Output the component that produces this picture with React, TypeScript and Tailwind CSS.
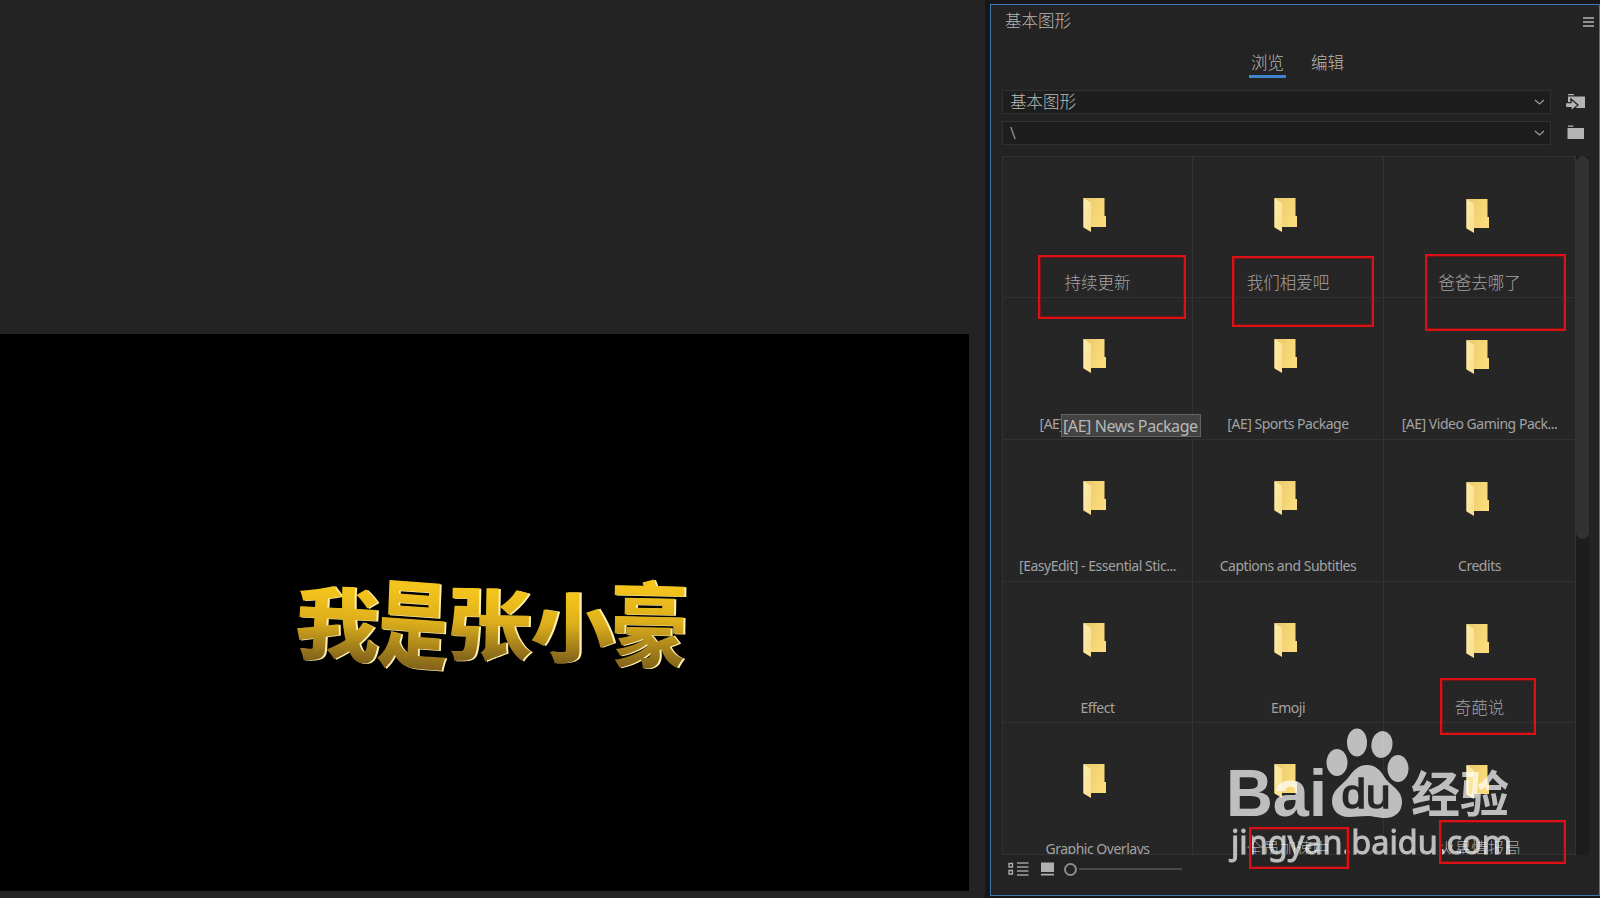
import clsx from "clsx";

type Folder = {
  label: string;
  cjk?: boolean;
};

const folders: Folder[] = [
  { label: "持续更新", cjk: true },
  { label: "我们相爱吧", cjk: true },
  { label: "爸爸去哪了", cjk: true },
  { label: "[AE] News Package" },
  { label: "[AE] Sports Package" },
  { label: "[AE] Video Gaming Pack..." },
  { label: "[EasyEdit] - Essential Stic..." },
  { label: "Captions and Subtitles" },
  { label: "Credits" },
  { label: "Effect" },
  { label: "Emoji" },
  { label: "奇葩说", cjk: true },
  { label: "Graphic Overlays" },
  { label: "全员加速中", cjk: true },
  { label: "火星情报局", cjk: true },
];

const marks = [
  "left-[1038px] top-[255px] w-[148px] h-[64px]",
  "left-[1232px] top-[256px] w-[142px] h-[71px]",
  "left-[1425px] top-[254px] w-[141px] h-[77px]",
  "left-[1440px] top-[678px] w-[96px] h-[57px]",
  "left-[1249px] top-[827px] w-[100px] h-[42px]",
  "left-[1439px] top-[820px] w-[127px] h-[44px]",
];

const titleGlyphs = [
  { ch: "我", x: 297, y: 586, w: 81, h: 75, rot: 3 },
  { ch: "是", x: 379, y: 579, w: 68, h: 90, rot: 3 },
  { ch: "张", x: 448, y: 587, w: 82, h: 74, rot: 1 },
  { ch: "小", x: 532, y: 591, w: 81, h: 71, rot: 0 },
  { ch: "豪", x: 612, y: 581, w: 74, h: 87, rot: 1 },
];

function FolderIcon() {
  return (
    <svg width="24" height="35" viewBox="0 0 24 35">
      <defs>
        <linearGradient id="back" x1="0" y1="0" x2="1" y2="0.4">
          <stop offset="0" stopColor="#e8c868" />
          <stop offset="1" stopColor="#fbdc7c" />
        </linearGradient>
        <linearGradient id="front" x1="0" y1="0" x2="1" y2="1">
          <stop offset="0" stopColor="#ffeeb0" />
          <stop offset="1" stopColor="#f9dd8b" />
        </linearGradient>
      </defs>
      <path d="M0.5 0H21.5V18H23V29H0.5Z" fill="url(#back)" />
      <path d="M0.5 0L8 5V34L0.5 29.5Z" fill="url(#front)" />
    </svg>
  );
}

function FolderCell({ folder, index }: { folder: Folder; index: number }) {
  const lastCol = index % 3 === 2;

  return (
    <div className="flex flex-col items-center min-w-0 border-r border-b border-[#323232] bg-[#262626]">
      <div
        className={clsx(
          "flex justify-center h-[34px] shrink-0",
          lastCol ? "mt-[42px] mr-[3px]" : "mt-[41px] mr-[5px]"
        )}
      >
        <FolderIcon />
      </div>

      <span
        className={clsx(
          "h-6 leading-6 shrink-0 whitespace-nowrap text-[#a3a3a3]",
          lastCol ? "mt-[38px]" : "mt-[39px]",
          folder.cjk
            ? "text-[16.5px] font-light"
            : "text-[14px] tracking-[-0.48px]"
        )}
      >
        {folder.label}
      </span>
    </div>
  );
}

function Select({ value }: { value: string }) {
  return (
    <div className="flex items-center justify-between w-[549px] h-6 pl-[7px] pr-[5px] border border-[#303030] bg-[#1d1d1d] text-[16.5px] font-light text-[#b8b8b8]">
      <span>{value}</span>
      <svg width="11" height="7" viewBox="0 0 11 7" fill="none">
        <path d="M1 1L5.5 5L10 1" stroke="#a0a0a0" strokeWidth="1.1" />
      </svg>
    </div>
  );
}

function InstallIcon() {
  return (
    <svg width="20" height="18" viewBox="0 0 20 18">
      <path d="M2 1H8V2.2H2Z M2 3.5H19V15H2Z" fill="#b4b4b4" />
      <path
        d="M-0.5 9.6H5V6L12 12L5 18V14.6H-0.5Z"
        fill="#b4b4b4"
        stroke="#242424"
        strokeWidth="1.3"
      />
    </svg>
  );
}

function ProgramMonitor() {
  return (
    <section className="w-[985px] h-full pt-[334px] bg-[#232323]">
      <div className="w-[969px] h-[557px] bg-black">
        <svg width="969" height="557" viewBox="0 334 969 557">
          <defs>
            <linearGradient
              id="gold"
              gradientUnits="userSpaceOnUse"
              x1="0"
              y1="8"
              x2="0"
              y2="100"
            >
              <stop offset="0" stopColor="#f3c41c" />
              <stop offset="0.4" stopColor="#dcae1c" />
              <stop offset="1" stopColor="#76591a" />
            </linearGradient>
          </defs>

          {titleGlyphs.map((g) => (
            <g
              key={g.ch}
              transform={`translate(${g.x} ${g.y}) scale(${g.w / 96} ${g.h / 94}) rotate(${g.rot} 48 48)`}
              className="font-black text-[100px]"
            >
              <text x="0.5" y="86" fill="#fff0b0">
                {g.ch}
              </text>
              <text x="-2" y="85.5" fill="url(#gold)">
                {g.ch}
              </text>
            </g>
          ))}
        </svg>
      </div>
    </section>
  );
}

function Watermark() {
  return (
    <svg
      className="absolute left-[1220px] top-[720px] opacity-70"
      width="300"
      height="150"
      viewBox="1220 720 300 150"
      fill="#ffffff"
    >
      <text
        x="1226"
        y="816"
        textLength="101"
        lengthAdjust="spacingAndGlyphs"
        className="font-['Liberation_Sans',sans-serif] font-bold text-[67px]"
      >
        Bai
      </text>

      <mask id="duMask">
        <rect x="1320" y="720" width="100" height="110" fill="white" />
        <text
          x="1341.5"
          y="808"
          textLength="49"
          lengthAdjust="spacingAndGlyphs"
          fill="black"
          stroke="black"
          strokeWidth="1.4"
          className="font-['Liberation_Sans',sans-serif] text-[40px]"
        >
          du
        </text>
      </mask>
      <path
        mask="url(#duMask)"
        d="M1367 765C1376 765 1381 771 1385 778C1391 786 1402 790 1402 802C1402 812 1395 818 1385 818C1378 818 1374 816 1367 816C1360 816 1356 817 1349 817C1338 817 1332 810 1332 801C1332 790 1341 786 1348 778C1353 771 1358 765 1367 765Z"
      />
      <ellipse cx="1337" cy="762.5" rx="10.5" ry="13.5" />
      <ellipse cx="1357" cy="742.5" rx="10" ry="14" />
      <ellipse cx="1382" cy="744.5" rx="10.5" ry="13.5" transform="rotate(8 1382 744)" />
      <ellipse cx="1398" cy="768.5" rx="10.5" ry="13.5" />

      <text
        x="1411"
        y="811.5"
        textLength="98"
        lengthAdjust="spacingAndGlyphs"
        className="font-bold text-[49px]"
      >
        经验
      </text>

      <text
        x="1231"
        y="854"
        textLength="281"
        lengthAdjust="spacingAndGlyphs"
        stroke="#ffffff"
        strokeWidth="0.9"
        className="text-[32px]"
      >
        jingyan.baidu.com
      </text>
    </svg>
  );
}

export default function App() {
  return (
    <div className="relative flex w-[1600px] h-[898px] overflow-hidden bg-[#171717] font-['Noto_Sans','Noto_Sans_CJK_SC',sans-serif]">
      <ProgramMonitor />

      {/* Essential Graphics panel */}
      <aside className="flex flex-col w-[610px] h-[892px] ml-[5px] mt-1 pl-[11px] border border-[#3c78b4] bg-[#232323]">
        <header className="flex items-center justify-between h-8 pl-[3px] pr-[5px] text-[16.5px] font-light text-[#b4b4b4]">
          <span>基本图形</span>
          <svg width="11" height="10" viewBox="0 0 11 10" className="mt-[2px]">
            <path d="M0 1H11M0 5H11M0 9H11" stroke="#b4b4b4" strokeWidth="1.4" />
          </svg>
        </header>

        <div className="flex pl-[247px] gap-[25px] h-[41px] pt-[12px] text-[16.5px] leading-7 font-light text-[#b4b4b4]">
          <span className="flex justify-center w-[37px] h-[29px] border-b-3 border-[#3d86cd]">
            浏览
          </span>
          <span>编辑</span>
        </div>

        <div className="flex items-center h-6 mt-[12px]">
          <Select value="基本图形" />
          <div className="ml-[15px]">
            <InstallIcon />
          </div>
        </div>

        <div className="flex items-center h-6 mt-[7px]">
          <Select value="\" />
          <svg width="18" height="14" viewBox="0 0 18 14" className="ml-[16px] mb-[2px]">
            <path d="M1 0.5H6.5V1.8H1Z M0.5 3H17V14H0.5Z" fill="#b4b4b4" />
          </svg>
        </div>

        <div className="flex h-[699px] mt-[11px] shrink-0">
          <div className="grid grid-cols-[190px_191px_192px] grid-rows-[141px_142px_142px_141px_142px] w-[574px] h-[699px] overflow-hidden border-t border-l border-b border-[#323232]">
            {folders.map((folder, i) => (
              <FolderCell key={folder.label} folder={folder} index={i} />
            ))}
          </div>
          <div className="w-[13px] h-[699px] bg-[#1c1c1c]">
            <div className="h-[383px] rounded-full bg-[#323232]" />
          </div>
        </div>

        <footer className="flex items-center pl-[6px] pt-[7px]">
          <svg width="21" height="14" viewBox="0 0 21 14" fill="none">
            <path
              d="M1 1.5H4.5V5H1Z M1 8.5H4.5V12H1Z"
              stroke="#b0b0b0"
              strokeWidth="1.3"
            />
            <path
              d="M9 1H20.5M9 5H20.5M9 9H20.5M9 13H20.5"
              stroke="#a0a0a0"
              strokeWidth="1.3"
            />
          </svg>
          <svg width="13" height="14" viewBox="0 0 13 14" className="ml-[12px]">
            <path d="M0 0.5H13V10H0Z M0 11.7H13V13.5H0Z" fill="#b0b0b0" />
          </svg>
          <div className="w-[13px] h-[13px] ml-[10px] rounded-full border-[2.5px] border-[#8c8c8c]" />
          <div className="w-[103px] h-[2px] ml-[2px] bg-[#484848]" />
        </footer>
      </aside>

      {/* Hover tooltip */}
      <div className="absolute left-[1061px] top-[414px] w-[140px] h-[23px] pl-[1px] border border-[#636363] bg-[#434343] text-[16px] leading-[22px] tracking-[-0.42px] whitespace-nowrap text-[#b8b8b8]">
        [AE] News Package
      </div>

      <Watermark />

      {marks.map((pos) => (
        <div
          key={pos}
          className={clsx(
            "absolute border-2 border-[#d81216] shadow-[inset_0_0_0_1px_#6e1618]",
            pos
          )}
        />
      ))}
    </div>
  );
}
